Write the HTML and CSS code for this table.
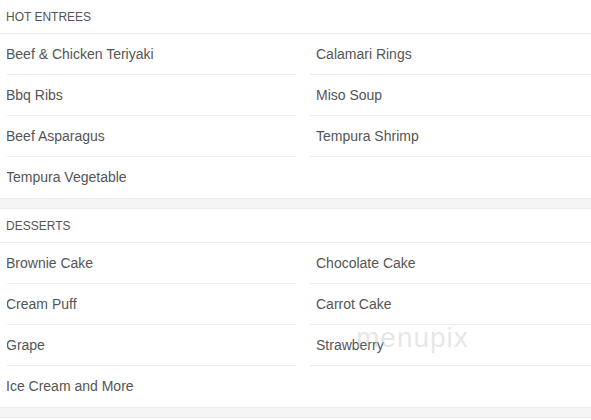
FILE: index.html
```html
<!DOCTYPE html>
<html>
<head>
<meta charset="utf-8">
<link rel="stylesheet" href="styles.css">
</head>
<body>
<div class="menu">
  <section class="section">
    <h2 class="section-title">HOT ENTREES</h2>
    <div class="items">
      <ul class="col col-left">
        <li class="item">Beef &amp; Chicken Teriyaki</li>
        <li class="item">Bbq Ribs</li>
        <li class="item">Beef Asparagus</li>
        <li class="item">Tempura Vegetable</li>
      </ul>
      <ul class="col col-right">
        <li class="item">Calamari Rings</li>
        <li class="item">Miso Soup</li>
        <li class="item">Tempura Shrimp</li>
      </ul>
    </div>
  </section>
  <div class="spacer"></div>
  <section class="section">
    <h2 class="section-title">DESSERTS</h2>
    <div class="items">
      <ul class="col col-left">
        <li class="item">Brownie Cake</li>
        <li class="item">Cream Puff</li>
        <li class="item">Grape</li>
        <li class="item">Ice Cream and More</li>
      </ul>
      <ul class="col col-right">
        <li class="item">Chocolate Cake</li>
        <li class="item">Carrot Cake</li>
        <li class="item">Strawberry</li>
      </ul>
    </div>
    <div class="watermark">menupix</div>
  </section>
  <div class="spacer"></div>
</div>
</body>
</html>
```

FILE: styles.css
```css
html, body {
  margin: 0;
  padding: 0;
  background: #fff;
}
body {
  font-family: "Liberation Sans", Arial, sans-serif;
  color: #555;
}
.menu {
  width: 591px;
}
.section {
  position: relative;
}
.section-title {
  margin: 0;
  height: 33px;
  line-height: 35px;
  padding-left: 6px;
  font-size: 12px;
  font-weight: normal;
  color: #555;
  border-bottom: 1px solid #ececec;
}
.items {
  display: grid;
  grid-template-columns: 290px 1fr;
  column-gap: 14px;
  padding-left: 6px;
}
.col {
  list-style: none;
  margin: 0;
  padding: 0;
}
.item {
  height: 40px;
  line-height: 41px;
  font-size: 14px;
  color: #555;
  border-bottom: 1px solid #ececec;
  overflow: hidden;
}
.col-left .item {
  margin-left: 1px;
  text-indent: -1px;
}
.col-left .item:last-child {
  border-bottom: none;
}
.col-right .item {
  padding-left: 6px;
}
.spacer {
  height: 9px;
  background: #f5f5f5;
  border-top: 1px solid #ececec;
  border-bottom: 1px solid #ececec;
}
.section + .spacer {
  margin-top: 1px;
}
.watermark {
  position: absolute;
  left: 356px;
  top: 113px;
  font-size: 28px;
  letter-spacing: 1px;
  color: rgba(200, 200, 200, 0.45);
  font-family: "Liberation Sans", Arial, sans-serif;
  pointer-events: none;
}
```
